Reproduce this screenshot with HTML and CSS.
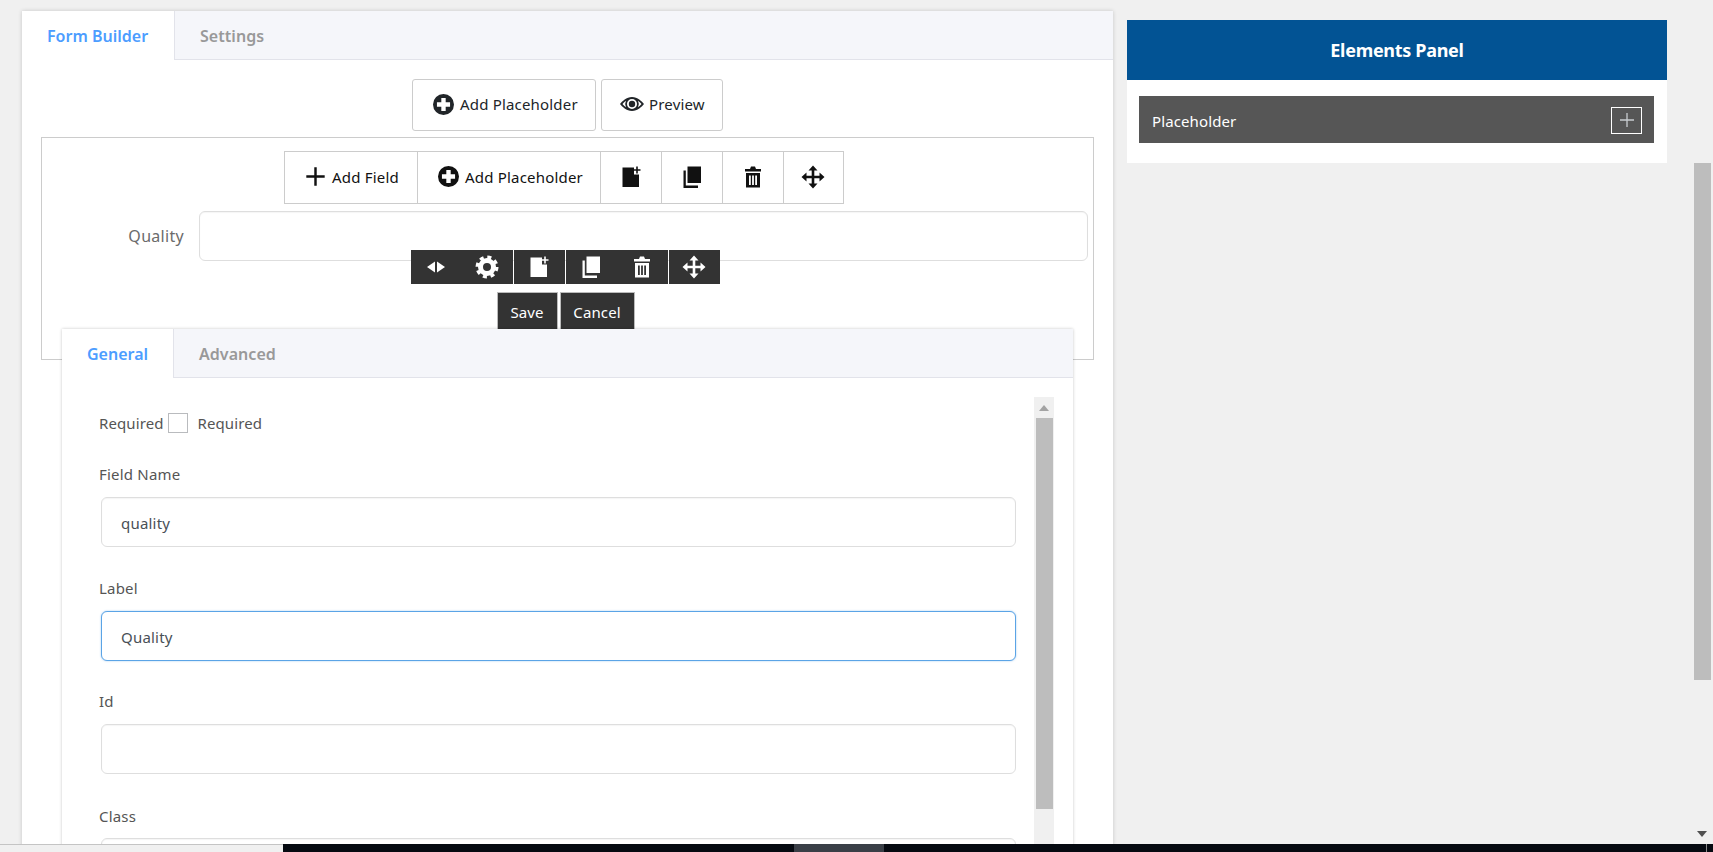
FILE: index.html
```html
<!DOCTYPE html>
<html lang="en">
<head>
<meta charset="utf-8">
<title>Form Builder</title>
<link rel="stylesheet" href="styles.css">
</head>
<body>
<svg class="defs" width="0" height="0" aria-hidden="true">
  <defs>
    <symbol id="i-pluscircle" viewBox="0 0 24 24"><path fill-rule="evenodd" d="M12 0a12 12 0 1 0 0 24 12 12 0 0 0 0-24zM9.500 4.500h5v5h5v5h-5v5h-5v-5h-5v-5h5z"/></symbol>
    <symbol id="i-plus" viewBox="0 0 24 24"><path d="M10.600 1.500h2.800v9.100h9.100v2.800h-9.100v9.100h-2.800v-9.100H1.500v-2.800h9.100z"/></symbol>
    <symbol id="i-file" viewBox="0 0 24 24"><path d="M3.500 2.500h11.500v7h5v12.500H3.500z"/><path class="thin" d="M18 1.500v7M14.500 5h7"/></symbol>
    <symbol id="i-copy" viewBox="0 0 24 24"><path d="M7.500 1.500h13.500v16.500H7.500z"/><path d="M3.500 5.500h2.300v15h12.200v2.500H3.500z"/></symbol>
    <symbol id="i-trash" viewBox="0 0 24 24"><path fill-rule="evenodd" d="M10 1.500h4L15 4h5v2.500H4V4h5zM5 8h14v14.500H5zM8 10.500V20h1.800v-9.500zM11.100 10.500V20h1.800v-9.500zM14.200 10.500V20H16v-9.500z"/></symbol>
    <symbol id="i-move" viewBox="0 0 24 24"><path d="M12 .5l4.500 5h-3.200v5.200h5.200V7.500l5 4.500-5 4.500v-3.200h-5.200v5.200h3.200l-4.500 5-4.500-5h3.200v-5.200H5.500v3.200L.5 12l5-4.500v3.200h5.200V5.500H7.500z"/></symbol>
    <symbol id="i-arrows" viewBox="0 0 24 24"><path d="M3 12l8-5.500v11zM13 6.500l8 5.500-8 5.500z"/></symbol>
    <symbol id="i-gear" viewBox="0 0 24 24"><circle class="ring" cx="12" cy="12" r="6.500" stroke-width="5"/><circle class="ring" cx="12" cy="12" r="9.800" stroke-width="3.400" stroke-dasharray="4 3.700"/></symbol>
    <symbol id="i-eye" viewBox="0 0 24 24"><path fill-rule="evenodd" d="M12 5C6.500 5 2 9.500 0 12c2 2.500 6.500 7 12 7s10-4.500 12-7c-2-2.500-6.500-7-12-7zM12 7a5 5 0 1 1 0 10 5 5 0 0 1 0-10zM2.500 12c1-1.200 2.200-2.300 3.500-3.200a7 7 0 0 0 0 6.400c-1.300-.9-2.500-2-3.500-3.200zM21.500 12c-1 1.200-2.200 2.300-3.500 3.200a7 7 0 0 0 0-6.400c1.300.9 2.500 2 3.500 3.200z"/><circle cx="12" cy="12" r="3.200"/></symbol>
  </defs>
</svg>

<div class="page">
  <main class="builder">
    <nav class="tabs">
      <span class="tab active">Form Builder</span>
      <span class="tab">Settings</span>
    </nav>
    <div class="top-actions">
      <button class="btn"><svg class="ico ico-20"><use href="#i-pluscircle"/></svg>Add Placeholder</button>
      <button class="btn btn-preview"><svg class="ico ico-24"><use href="#i-eye"/></svg>Preview</button>
    </div>

    <section class="canvas">
      <div class="row-tools">
        <button class="cell cell-field"><svg class="ico ico-20"><use href="#i-plus"/></svg>Add Field</button>
        <button class="cell cell-ph"><svg class="ico ico-20"><use href="#i-pluscircle"/></svg>Add Placeholder</button>
        <button class="cell cell-icon"><svg class="ico ico-24"><use href="#i-file"/></svg></button>
        <button class="cell cell-icon"><svg class="ico ico-24"><use href="#i-copy"/></svg></button>
        <button class="cell cell-icon"><svg class="ico ico-24"><use href="#i-trash"/></svg></button>
        <button class="cell cell-move"><svg class="ico ico-24"><use href="#i-move"/></svg></button>
      </div>

      <div class="quality-row">
        <label class="quality-label">Quality</label>
        <input class="control quality-input" type="text">
      </div>

      <div class="float-tools">
        <div class="float-group"><span class="float-btn"><svg class="ico ico-24"><use href="#i-arrows"/></svg></span><span class="float-btn"><svg class="ico ico-24"><use href="#i-gear"/></svg></span></div>
        <div class="float-group"><span class="float-btn"><svg class="ico ico-24"><use href="#i-file"/></svg></span></div>
        <div class="float-group"><span class="float-btn"><svg class="ico ico-24"><use href="#i-copy"/></svg></span><span class="float-btn"><svg class="ico ico-24"><use href="#i-trash"/></svg></span></div>
        <div class="float-group"><span class="float-btn"><svg class="ico ico-24"><use href="#i-move"/></svg></span></div>
      </div>

      <div class="save-row">
        <button class="dark-btn dark-save">Save</button>
        <button class="dark-btn dark-cancel">Cancel</button>
      </div>

      <section class="editor">
        <nav class="tabs tabs-editor">
          <span class="tab active">General</span>
          <span class="tab">Advanced</span>
        </nav>
        <div class="editor-body">
          <form class="editor-form">
            <div class="check-row">
              <span>Required</span>
              <input class="check" type="checkbox">
              <span class="check-text">Required</span>
            </div>
            <div class="group"><label>Field Name</label><input class="control" type="text" value="quality"></div>
            <div class="group"><label>Label</label><input class="control focused" type="text" value="Quality"></div>
            <div class="group group-id"><label>Id</label><input class="control" type="text"></div>
            <div class="group group-class"><label>Class</label><input class="control" type="text"></div>
          </form>
          <div class="inner-scroll">
            <span class="arrow-up"></span>
            <span class="inner-thumb"></span>
          </div>
        </div>
      </section>
    </section>
  </main>

  <aside class="side">
    <h2 class="side-head">Elements Panel</h2>
    <div class="side-body">
      <div class="side-item">
        <span class="side-label">Placeholder</span>
        <span class="side-add"><svg class="side-plus" viewBox="0 0 16 16"><path d="M8 1v14M1 8h14"/></svg></span>
      </div>
    </div>
  </aside>
</div>

<div class="page-thumb"></div>
<span class="arrow-down"></span>
<div class="bottom-strip">
  <div class="strip-light"></div>
  <div class="strip-dark"><span class="strip-seg"></span><span class="strip-line"></span></div>
</div>
</body>
</html>
```

FILE: styles.css
```css
* { box-sizing: border-box; }
html, body { margin: 0; height: 852px; overflow: hidden; }
body {
  position: relative;
  background: #f0f0f0;
  font-family: "Noto Sans", "Open Sans", "Liberation Sans", sans-serif;
  font-size: 15px;
  color: #212529;
}
.defs { position: absolute; }
.thin { fill: none; stroke: currentColor; stroke-width: 1.6; }
.ring { fill: none; stroke: currentColor; }
.ico { display: block; fill: currentColor; flex: none; }
.ico-20 { width: 21px; height: 21px; }
.ico-24 { width: 24px; height: 24px; }

.page { display: flex; align-items: flex-start; padding: 11px 0 0 22px; gap: 14px; }

.builder {
  width: 1091px;
  height: 900px;
  background: #fff;
  box-shadow: 0 0 4px rgba(0, 0, 0, .18);
}

.tabs {
  display: flex;
  height: 49px;
  background: #f5f6fa;
  border-bottom: 1px solid #e2e3ea;
}
.tab {
  padding: 0 25px;
  line-height: 50px;
  font-size: 16px;
  font-weight: 600;
  color: #999;
  letter-spacing: .05px;
}
.tab.active {
  width: 153px;
  background: #fff;
  color: #4c9dff;
  margin-bottom: -1px;
  height: 49px;
  border-right: 1px solid #e2e3ea;
  letter-spacing: 0;
  white-space: nowrap;
}

.top-actions {
  display: flex;
  justify-content: center;
  gap: 5px;
  padding-top: 19px;
}
.btn {
  display: flex;
  align-items: center;
  gap: 6px;
  height: 52px;
  width: 184px;
  padding: 0 0 2px 20px;
  background: #fff;
  border: 1px solid #ccc;
  border-radius: 3px;
  font: inherit;
  letter-spacing: .18px;
  color: #212529;
}
.btn-preview { width: 122px; padding-left: 18px; gap: 5px; }

.canvas {
  height: 223px;
  margin: 6px 19px 0;
  padding-top: 13px;
  border: 1px solid #ccc;
  background: #fff;
}

.row-tools { display: flex; justify-content: center; padding-right: 8px; }
.cell {
  display: flex;
  align-items: center;
  justify-content: center;
  height: 53px;
  background: #fff;
  border: 1px solid #ccc;
  font: inherit;
  letter-spacing: .2px;
  color: #111;
  gap: 6px;
  padding: 0 0 2px;
}
.cell + .cell { border-left: 0; }
.cell-field { width: 134px; padding-left: 3px; }
.cell-ph { width: 183px; padding-left: 4px; }
.cell-icon { width: 61px; }
.cell-move { width: 60px; }

.quality-row { display: flex; align-items: center; margin-top: 7px; padding-left: 81px; }
.quality-label { flex: none; width: 61px; text-align: right; font-size: 16px; color: #6b6b6b; letter-spacing: .3px; }
.control {
  display: block;
  width: 100%;
  height: 50px;
  padding: 2px 19px 0;
  background: #fff;
  border: 1px solid #dedede;
  border-radius: 6px;
  box-shadow: inset 0 1px 1px rgba(0, 0, 0, .04);
  font: inherit;
  letter-spacing: .2px;
  color: #495057;
  outline: none;
}
.control.focused { border-color: #5ba4e6; box-shadow: 0 0 2px rgba(91, 164, 230, .6); }
.control.quality-input { flex: none; width: 889px; margin-left: 15px; }

.float-tools { display: flex; justify-content: center; gap: 1px; margin-top: -11px; padding-right: 5px; position: relative; }
.float-group { display: flex; background: #333; height: 34px; }
.float-btn { display: flex; align-items: center; justify-content: center; width: 51px; color: #fff; }

.save-row { display: flex; justify-content: center; gap: 2px; margin-top: 8px; padding-right: 4px; position: relative; }
.dark-btn {
  height: 37px;
  padding: 1px 0 0;
  background: #333;
  border: 1px solid #bbb;
  border-bottom: 0;
  color: #fff;
  font: inherit;
  letter-spacing: .12px;
}
.dark-save { width: 61px; }
.dark-cancel { width: 75px; }

.editor {
  position: relative;
  margin: 0 20px;
  width: 1011px;
  height: 600px;
  background: #fff;
  box-shadow: 0 0 3px rgba(0, 0, 0, .22);
}
.tabs-editor .tab.active { width: 112px; }
.tabs-editor .tab { padding: 0 25px; }

.editor-body { display: flex; padding: 19px 19px 0 37px; gap: 18px; }
.editor-form { width: 917px; padding-top: 16px; color: #555; letter-spacing: .2px; }
.check-row { display: flex; align-items: center; height: 20px; letter-spacing: .1px; }
.check {
  appearance: none;
  width: 20px;
  height: 20px;
  margin: 0 10px 0 4px;
  background: #fff;
  border: 1px solid #b9bbbe;
}
.group { margin-top: 30px; }
.group-id { margin-top: 29px; }
.group-class { margin-top: 31px; }
.group label { display: block; height: 22px; line-height: 22px; margin-bottom: 12px; }
.group-class label { margin-bottom: 11px; }
.group .control { margin-left: 2px; width: 915px; }

.inner-scroll {
  position: relative;
  width: 20px;
  height: 500px;
  flex: none;
  padding: 21px 1px 0 2px;
  background: #f0f0f0;
}
.inner-thumb { display: block; height: 391px; background: #bdbdbd; }
.arrow-up {
  position: absolute;
  left: 5px;
  top: 8px;
  border: 5px solid transparent;
  border-top: 0;
  border-bottom: 6px solid #a3a3a3;
}

.side { width: 540px; margin-top: 9px; background: #fff; }
.side-head {
  margin: 0;
  height: 60px;
  line-height: 60px;
  text-align: center;
  background: #025394;
  color: #fff;
  font-size: 18px;
  font-weight: 700;
  letter-spacing: -.3px;
}
.side-body { padding: 16px 13px 20px 12px; }
.side-item {
  display: flex;
  align-items: center;
  justify-content: space-between;
  height: 47px;
  padding: 0 12px 0 13px;
  background: #565656;
  color: #fff;
  letter-spacing: .12px;
}
.side-label { padding-top: 2px; }
.side-add {
  display: flex;
  align-items: center;
  justify-content: center;
  width: 31px;
  height: 27px;
  border: 1px solid #fff;
  margin-top: 1px;
}
.side-plus { width: 16px; height: 16px; fill: none; stroke: #c8ccd0; stroke-width: 1.3; }

.page-thumb { position: absolute; left: 1694px; top: 163px; width: 17px; height: 517px; background: #bdbdbd; }
.arrow-down {
  position: absolute;
  left: 1697px;
  top: 831px;
  border: 5px solid transparent;
  border-bottom: 0;
  border-top: 6px solid #505050;
}

.bottom-strip { position: absolute; left: 0; right: 0; bottom: 0; height: 8px; display: flex; }
.strip-light { width: 283px; background: #f0f0f0; border-top: 1px solid #c4c4c4; }
.strip-dark { position: relative; flex: 1; background: #060a11; }
.strip-seg { position: absolute; left: 511px; top: 0; width: 90px; height: 8px; background: #3a3f47; }
.strip-line { position: absolute; right: 6px; top: 0; width: 1px; height: 8px; background: #8a8a8a; }
```
